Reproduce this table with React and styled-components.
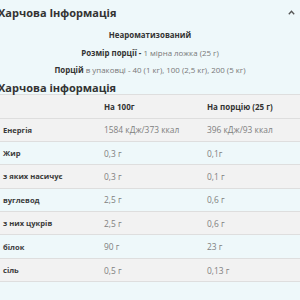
import React from "react";
import styled, { createGlobalStyle } from "styled-components";

const GlobalStyle = createGlobalStyle`
  html, body {
    margin: 0;
    padding: 0;
    background: #eef8fa;
    font-family: "Open Sans", "Noto Sans", sans-serif;
    color: #333;
  }
`;

const Section = styled.section`
  width: 300px;
  overflow: hidden;
`;

const Header = styled.div`
  display: flex;
  align-items: center;
  justify-content: space-between;
  height: 24px;
  padding-right: 5px;
`;

const Title = styled.h2`
  margin: 0 0 0 -2px;
  font-size: 11px;
  font-weight: 700;
  line-height: 1;
  color: #333;
`;

const Chevron = styled.svg`
  width: 7px;
  height: 5px;
  display: block;
`;

const Info = styled.div`
  display: flex;
  flex-direction: column;
  align-items: center;
  padding-top: 3px;
`;

const InfoLine = styled.p`
  margin: 0;
  height: 17.5px;
  line-height: 17.5px;
  font-size: 7.9px;
  color: #777;
  white-space: nowrap;
`;

const Strong = styled.b`
  font-weight: 700;
  color: #333;
`;

const SubTitle = styled.h3`
  margin: 2px 0 0 -2px;
  font-size: 11px;
  font-weight: 700;
  line-height: 12px;
  color: #333;
`;

const Table = styled.table`
  width: 100%;
  border-collapse: collapse;
  border-top: 1px solid #dedede;
  table-layout: fixed;
`;

const Row = styled.tr`
  height: ${({ $head }) => ($head ? "24px" : "23.4px")};
  background: ${({ $shade }) => ($shade ? "#f2f2f2" : "transparent")};
  border-bottom: 1px solid #dedede;
`;

const HeadCell = styled.th`
  box-sizing: border-box;
  width: ${({ $w }) => $w}px;
  padding: 0 0 0 4px;
  text-align: left;
  font-size: 8px;
  font-weight: 700;
  color: #333;
  white-space: nowrap;
`;

const LabelCell = styled.td`
  padding: 0 0 0 3px;
  font-size: 7.6px;
  font-weight: 700;
  color: #3a3a3a;
  white-space: nowrap;
`;

const ValueCell = styled.td`
  padding: 0 0 0 4px;
  font-size: 8.4px;
  color: #808080;
  white-space: nowrap;
`;

const rows = [
  ["Енергія", "1584 кДж/373 ккал", "396 кДж/93 ккал"],
  ["Жир", "0,3 г", "0,1г"],
  ["з яких насичує", "0,3 г", "0,1 г"],
  ["вуглевод", "2,5 г", "0,6 г"],
  ["з них цукрів", "2,5 г", "0,6 г"],
  ["білок", "90 г", "23 г"],
  ["сіль", "0,5 г", "0,13 г"],
];

export default function App() {
  return (
    <Section>
      <GlobalStyle />
      <Header>
        <Title>Харчова Інформація</Title>
        <Chevron viewBox="0 0 7 5">
          <polyline
            points="0.8,4.2 3.5,1.2 6.2,4.2"
            fill="none"
            stroke="#555"
            strokeWidth="1.3"
          />
        </Chevron>
      </Header>
      <Info>
        <InfoLine>
          <Strong>Неароматизований</Strong>
        </InfoLine>
        <InfoLine>
          <Strong>Розмір порції - </Strong>1 мірна ложка (25 г)
        </InfoLine>
        <InfoLine>
          <Strong>Порцій</Strong> в упаковці - 40 (1 кг), 100 (2,5 кг), 200 (5 кг)
        </InfoLine>
      </Info>
      <SubTitle>Харчова інформація</SubTitle>
      <Table>
        <thead>
          <Row $head $shade>
            <HeadCell $w={100}></HeadCell>
            <HeadCell $w={103}>На 100г</HeadCell>
            <HeadCell $w={97}>На порцію (25 г)</HeadCell>
          </Row>
        </thead>
        <tbody>
          {rows.map(([label, per100, perServing], i) => (
            <Row key={label} $shade={i % 2 === 0}>
              <LabelCell>{label}</LabelCell>
              <ValueCell>{per100}</ValueCell>
              <ValueCell>{perServing}</ValueCell>
            </Row>
          ))}
        </tbody>
      </Table>
    </Section>
  );
}
